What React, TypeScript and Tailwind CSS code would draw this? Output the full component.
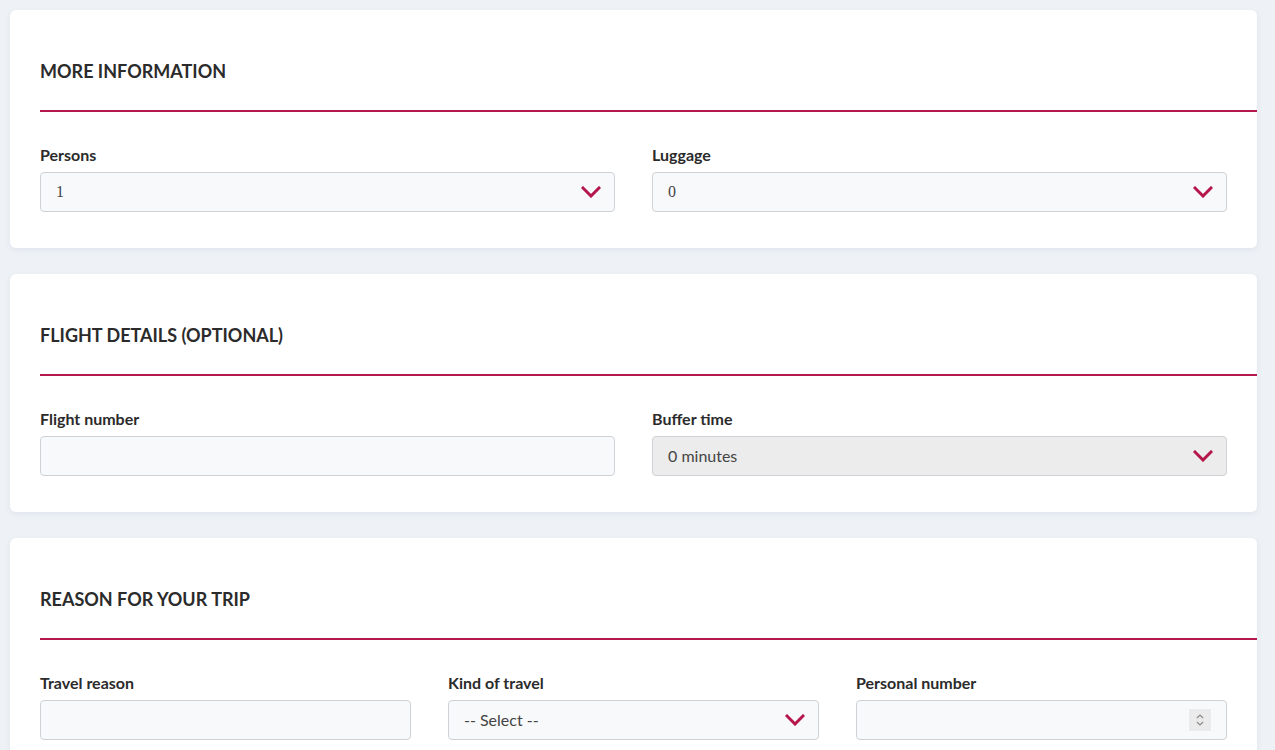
import React from "react";

const font = { fontFamily: "Lato, 'Open Sans', sans-serif" };

function Chevron() {
    return (
        <svg width="20" height="12" viewBox="0 0 20 12" className="shrink-0">
            <path d="M2 2 L10 10 L18 2" fill="none" stroke="#b5174b" strokeWidth="3" strokeLinecap="square" />
        </svg>
    );
}

function Field({ label, children }: { label: string; children: React.ReactNode }) {
    return (
        <div className="flex flex-col">
            <label className="mb-[8px] text-[16px] font-bold leading-[18px] text-[#2b2b2b]">{label}</label>
            {children}
        </div>
    );
}

function Select({ value, serif, disabled }: { value: string; serif?: boolean; disabled?: boolean }) {
    return (
        <div
            className={`flex h-10 items-center justify-between rounded border border-[#cfd2d6] pl-[15px] pr-[13px] ${
                disabled ? "bg-[#ececec]" : "bg-[#f8f9fb]"
            }`}
        >
            <span
                className="text-[16px] text-[#444]"
                style={serif ? { fontFamily: "'Liberation Serif', serif" } : undefined}
            >
                {value}
            </span>
            <Chevron />
        </div>
    );
}

function Input({ spinner }: { spinner?: boolean }) {
    return (
        <div className="flex h-10 items-center justify-end rounded border border-[#cfd2d6] bg-[#f8f9fb] pr-[15px]">
            {spinner && (
                <div className="flex h-[22px] w-[22px] items-center justify-center bg-[#ebebeb]">
                    <svg width="10" height="16" viewBox="0 0 10 16">
                        <path d="M2 6 L5 3 L8 6 M2 10 L5 13 L8 10" fill="none" stroke="#888" strokeWidth="1.2" />
                    </svg>
                </div>
            )}
        </div>
    );
}

function Card({ title, children, last }: { title: string; children: React.ReactNode; last?: boolean }) {
    return (
        <section
            className={`rounded-md bg-white pl-[30px] shadow-[0_2px_6px_rgba(40,60,90,0.08)] ${last ? "pb-16" : "pb-9"}`}
        >
            <h2 className="pt-[50px] text-[18px] font-bold leading-[22px] text-[#2b2b2b]">{title}</h2>
            <div className="mt-[28px] h-[2px] bg-[#b5174b]" />
            <div className="pr-[30px] pt-[34px]">{children}</div>
        </section>
    );
}

export default function App() {
    return (
        <div className="min-h-screen bg-[#eef2f7] px-[10px] pt-[10px] pr-[18px]" style={font}>
            <div className="flex flex-col gap-[26px]">
                <Card title="MORE INFORMATION">
                    <div className="grid grid-cols-2 gap-[37px]">
                        <Field label="Persons">
                            <Select value="1" serif />
                        </Field>
                        <Field label="Luggage">
                            <Select value="0" serif />
                        </Field>
                    </div>
                </Card>
                <Card title="FLIGHT DETAILS (OPTIONAL)">
                    <div className="grid grid-cols-2 gap-[37px]">
                        <Field label="Flight number">
                            <Input />
                        </Field>
                        <Field label="Buffer time">
                            <Select value="0 minutes" disabled />
                        </Field>
                    </div>
                </Card>
                <Card title="REASON FOR YOUR TRIP" last>
                    <div className="grid grid-cols-3 gap-[37px]">
                        <Field label="Travel reason">
                            <Input />
                        </Field>
                        <Field label="Kind of travel">
                            <Select value="-- Select --" />
                        </Field>
                        <Field label="Personal number">
                            <Input spinner />
                        </Field>
                    </div>
                </Card>
            </div>
        </div>
    );
}
